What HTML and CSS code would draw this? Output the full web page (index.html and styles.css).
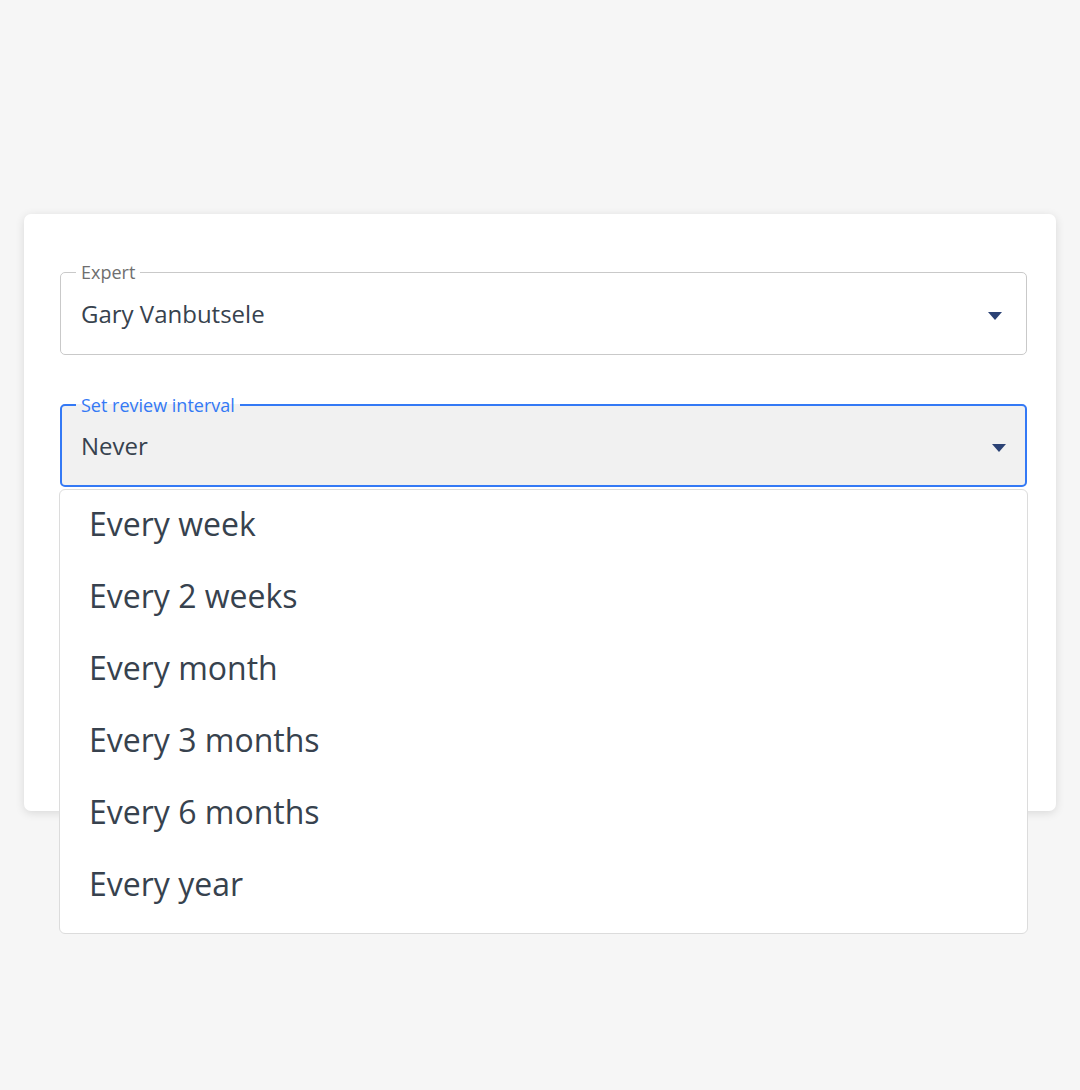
FILE: index.html
```html
<!DOCTYPE html>
<html>
<head>
<meta charset="utf-8">
<link rel="stylesheet" href="styles.css">
</head>
<body>
<div class="card">
  <fieldset class="field">
    <legend>Expert</legend>
    <div class="row">
      <span class="value">Gary Vanbutsele</span>
      <svg class="caret" width="14" height="8" viewBox="0 0 14 8"><path d="M0 0H14L7 8Z" fill="#2b4275"/></svg>
    </div>
  </fieldset>
  <div class="select-wrap">
    <fieldset class="field focused">
      <legend>Set review interval</legend>
      <div class="row">
        <span class="value">Never</span>
        <svg class="caret" width="14" height="8" viewBox="0 0 14 8"><path d="M0 0H14L7 8Z" fill="#2b4275"/></svg>
      </div>
    </fieldset>
    <ul class="menu">
      <li>Every week</li>
      <li>Every 2 weeks</li>
      <li>Every month</li>
      <li>Every 3 months</li>
      <li>Every 6 months</li>
      <li>Every year</li>
    </ul>
  </div>
</div>
</body>
</html>
```
FILE: styles.css
```css
html, body {
  margin: 0;
  background: #f6f6f6;
  font-family: "Open Sans", "Noto Sans", sans-serif;
  color: #37424e;
}
body {
  padding: 214px 24px 0 24px;
  height: 1090px;
  box-sizing: border-box;
}
.card {
  background: #fff;
  border-radius: 7px;
  box-shadow: 0 2px 10px rgba(0, 0, 0, 0.12);
  height: 597px;
  box-sizing: border-box;
  padding: 48px 29px 0 36px;
}
.field {
  margin: 0;
  padding: 0 24px 0 20px;
  border: 1px solid #c9c9c9;
  border-radius: 5px;
  min-width: 0;
}
.field legend {
  font-size: 18px;
  line-height: 20px;
  color: #6f6f6f;
  padding: 0 5px;
  margin-left: -5px;
}
.row {
  display: flex;
  align-items: center;
  justify-content: space-between;
  height: 62px;
  padding-bottom: 10px;
}
.row .caret {
  margin-top: 6px;
}
.value {
  font-size: 24px;
}
.select-wrap {
  position: relative;
  margin-top: 40px;
}
.field.focused {
  border: 2px solid #3479f5;
  background: #f1f1f1;
  padding: 0 19px 0 19px;
}
.field.focused legend {
  color: #3479f5;
}
.field.focused .row {
  height: 60px;
}
.menu {
  position: absolute;
  top: calc(100% + 2px);
  left: -1px;
  right: -1px;
  margin: 0;
  padding: 0 0 11px 0;
  list-style: none;
  background: #fff;
  border: 1px solid #dcdcdc;
  border-radius: 6px;
}
.menu li {
  height: 68px;
  line-height: 68px;
  padding-bottom: 4px;
  font-size: 32px;
  padding-left: 29px;
}
```
